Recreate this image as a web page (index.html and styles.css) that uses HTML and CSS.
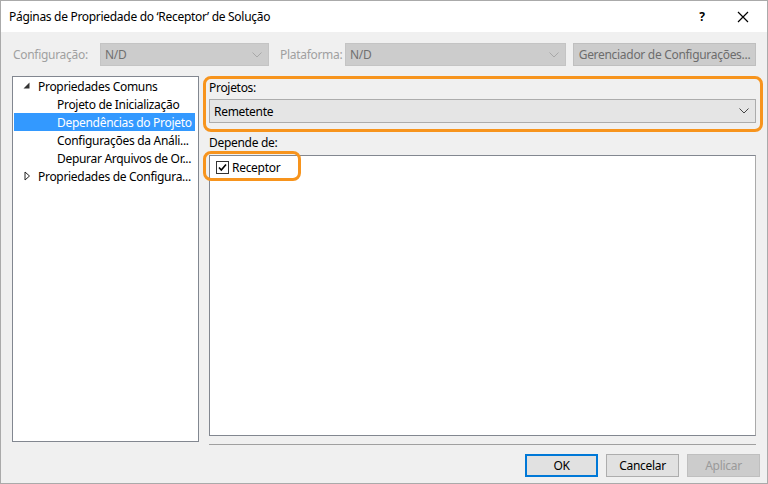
FILE: index.html
```html
<!DOCTYPE html>
<html lang="pt">
<head>
<meta charset="utf-8">
<title>Páginas de Propriedade</title>
<link rel="stylesheet" href="styles.css">
</head>
<body>
<div class="window">
  <div class="titlebar">
    <span class="title">Páginas de Propriedade do ‘Receptor’ de Solução</span>
    <span class="help">?</span>
    <span class="close">
      <svg width="12" height="12" viewBox="0 0 12 12"><path d="M1 1 L11 11 M11 1 L1 11" stroke="#000" stroke-width="1.2" fill="none"/></svg>
    </span>
  </div>

  <div class="toolbar">
    <span class="tlabel cfg">Configuração:</span>
    <div class="combo combo-cfg"><span>N/D</span>
      <svg class="chev" width="10" height="6" viewBox="0 0 10 6"><path d="M0.5 0.5 L5 5 L9.5 0.5" stroke="#a8a8a8" fill="none"/></svg>
    </div>
    <span class="tlabel plat">Plataforma:</span>
    <div class="combo combo-plat"><span>N/D</span>
      <svg class="chev" width="10" height="6" viewBox="0 0 10 6"><path d="M0.5 0.5 L5 5 L9.5 0.5" stroke="#a8a8a8" fill="none"/></svg>
    </div>
    <div class="tbtn">Gerenciador de Configurações...</div>
  </div>

  <div class="content">
    <div class="tree">
      <div class="row lvl0">
        <svg class="exp" width="7" height="7" viewBox="0 0 7 7"><path d="M6.5 0.5 L6.5 6.5 L0.5 6.5 Z" fill="#333"/></svg>
        <span>Propriedades Comuns</span>
      </div>
      <div class="row lvl1"><span>Projeto de Inicialização</span></div>
      <div class="row lvl1 sel"><span>Dependências do Projeto</span></div>
      <div class="row lvl1"><span>Configurações da Análi...</span></div>
      <div class="row lvl1"><span>Depurar Arquivos de Or...</span></div>
      <div class="row lvl0">
        <svg class="col" width="7" height="10" viewBox="0 0 7 10"><path d="M1 1 L5.5 5 L1 9 Z" fill="none" stroke="#222" stroke-width="1"/></svg>
        <span>Propriedades de Configura...</span>
      </div>
    </div>

    <div class="right">
      <div class="label">Projetos:</div>
      <div class="dropdown"><span>Remetente</span>
        <svg class="chev2" width="10" height="6" viewBox="0 0 10 6"><path d="M0.5 0.5 L5 5 L9.5 0.5" stroke="#444" fill="none"/></svg>
      </div>
      <div class="label label2">Depende de:</div>
      <div class="list">
        <div class="item">
          <span class="check"><svg width="11" height="11" viewBox="0 0 11 11"><path d="M2 5.5 L4.3 8 L9 2.5" stroke="#000" stroke-width="1.6" fill="none"/></svg></span>
          <span>Receptor</span>
        </div>
      </div>
      <div class="sep"></div>
      <div class="mark mark1"></div>
      <div class="mark mark2"></div>
    </div>
  </div>

  <div class="footer">
    <div class="btn ok">OK</div>
    <div class="btn">Cancelar</div>
    <div class="btn disabled">Aplicar</div>
  </div>
</div>
</body>
</html>
```

FILE: styles.css
```css
* { box-sizing: border-box; }
html, body { margin: 0; padding: 0; }
body {
  font-family: "Noto Sans", "Open Sans", sans-serif;
  font-size: 12px;
  letter-spacing: -0.3px;
  color: #000;
  background: #fff;
}
.window {
  width: 768px;
  height: 484px;
  border: 1px solid #aaaaaa;
  background: #f0f0f0;
  display: flex;
  flex-direction: column;
}
.titlebar {
  height: 31px;
  background: #fff;
  display: flex;
  align-items: center;
  padding-left: 8px;
  flex: none;
}
.title { flex: 1; }
.help { width: 18px; font-weight: bold; margin-right: 26px; text-align: center; }
.close { width: 12px; height: 12px; margin-right: 18px; display: flex; }

.toolbar {
  margin-top: 11px;
  height: 23px;
  display: flex;
  align-items: center;
  padding-left: 12px;
  flex: none;
}
.tlabel { color: #a0a0a0; white-space: nowrap; }
.cfg { width: 87px; }
.plat { width: 65px; margin-left: 11px; }
.combo {
  height: 23px;
  background: #cccccc;
  border: 1px solid #c4c4c4;
  color: #707070;
  display: flex;
  align-items: center;
  padding-left: 4px;
}
.combo span { flex: 1; }
.chev { margin-right: 6px; }
.combo-cfg { width: 169px; }
.combo-plat { width: 221px; }
.tbtn {
  margin-left: 7px;
  width: 183px;
  height: 23px;
  background: #cccccc;
  border: 1px solid #bfbfbf;
  color: #6d6d6d;
  display: flex;
  align-items: center;
  justify-content: center;
  white-space: nowrap;
}

.content {
  margin-top: 10px;
  display: flex;
  padding-left: 11px;
  flex: none;
}
.tree {
  width: 187px;
  height: 366px;
  border: 1px solid #828790;
  background: #fff;
  padding-top: 0;
  padding-left: 1px;
}
.row {
  height: 18px;
  display: flex;
  align-items: center;
  white-space: nowrap;
}
.lvl0 { padding-left: 9px; }
.exp { margin-right: 8px; margin-top: -2px; }
.col { margin-left: 1px; margin-right: 7px; }
.lvl1 { padding-left: 43px; }
.sel { background: #3399ff; color: #fff; width: 181px; }

.right {
  margin-left: 10px;
  width: 547px;
  position: relative;
  display: flex;
  flex-direction: column;
}
.label { height: 18px; line-height: 18px; margin-top: 3px; }
.dropdown {
  margin-top: 2px;
  height: 24px;
  background: #e5e5e5;
  border: 1px solid #acacac;
  display: flex;
  align-items: center;
  padding-left: 4px;
}
.dropdown span { flex: 1; }
.chev2 { margin-right: 6px; }
.label2 { margin-top: 11px; }
.list {
  margin-top: 3px;
  height: 281px;
  background: #fff;
  border: 1px solid #828790;
  border-right-color: #aaa;
}
.item {
  display: flex;
  align-items: center;
  height: 18px;
  margin-top: 2px;
  padding-left: 6px;
}
.check {
  width: 13px;
  height: 13px;
  border: 1px solid #333;
  background: #fff;
  display: flex;
  align-items: center;
  justify-content: center;
  margin-right: 3px;
}
.sep {
  margin-top: 8px;
  height: 1px;
  background: #a0a0a0;
}

.mark {
  position: absolute;
  border: 3px solid #f7941d;
  border-radius: 8px;
  pointer-events: none;
}
.mark1 { left: -6px; top: 0; width: 560px; height: 56px; }
.mark2 { left: -6px; top: 75px; width: 98px; height: 30px; }

.footer {
  margin-top: 9px;
  display: flex;
  justify-content: flex-end;
  gap: 8px;
  padding-right: 7px;
  flex: none;
}
.btn {
  width: 73px;
  height: 23px;
  background: #e1e1e1;
  border: 1px solid #adadad;
  display: flex;
  align-items: center;
  justify-content: center;
}
.btn.ok { border: 2px solid #0078d7; }
.btn.disabled { background: #cccccc; border-color: #bfbfbf; color: #9a9a9a; }
```
